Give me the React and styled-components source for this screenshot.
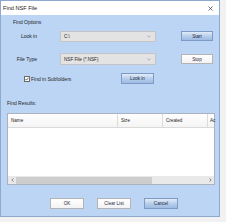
import styled, { createGlobalStyle } from "styled-components";

const GlobalStyle = createGlobalStyle`
  html, body {
    margin: 0;
    padding: 0;
    background: #f2f2f2;
  }
  body {
    width: 226px;
    height: 222px;
    overflow: hidden;
    font-family: "Liberation Sans", Arial, sans-serif;
    color: #1e1e1e;
  }
`;

const Window = styled.div`
  width: 218px;
  height: 215px;
  border: 1px solid #8ea9cf;
  background: #bcd5f5;
  display: flex;
  flex-direction: column;
  box-sizing: content-box;
`;

const TitleBar = styled.div`
  height: 14px;
  background: #ffffff;
  display: flex;
  align-items: center;
  justify-content: space-between;
  padding: 0 6px 0 2px;
  font-size: 5.6px;
  color: #222;
`;

const Body = styled.div`
  flex: 1;
  display: flex;
  flex-direction: column;
`;

const GroupLabel = styled.div`
  height: 8px;
  line-height: 8px;
  font-size: 5px;
  margin: ${(p) => p.$top}px 0 0 ${(p) => p.$left}px;
`;

const Row = styled.div`
  display: flex;
  align-items: center;
  height: ${(p) => p.$h}px;
  margin-top: ${(p) => p.$top}px;
`;

const Label = styled.div`
  width: 36px;
  text-align: right;
  font-size: 5px;
`;

const Combo = styled.div`
  margin-left: 23px;
  width: 96px;
  height: ${(p) => p.$h}px;
  box-sizing: border-box;
  background: #e3e3e3;
  border: 1px solid #c4c4c4;
  display: flex;
  align-items: center;
  justify-content: space-between;
  padding: 0 4px 0 3px;
  font-size: 4.6px;
`;

const Button = styled.div`
  width: ${(p) => p.$w || 32}px;
  height: ${(p) => p.$h || 10}px;
  box-sizing: border-box;
  margin-left: ${(p) => p.$left || 0}px;
  display: flex;
  align-items: center;
  justify-content: center;
  font-size: 4.6px;
  border: 1px solid ${(p) => (p.$primary ? "#7d9bc6" : "#b4b4b4")};
  background: ${(p) =>
    p.$primary
      ? "linear-gradient(#e2ecf8, #b8cfec 50%, #9fbbe2)"
      : "linear-gradient(#ffffff, #f3f3f3)"};
  color: #1e2a3a;
`;

const CheckWrap = styled.div`
  display: flex;
  align-items: center;
  margin-left: 23px;
  width: 97px;
  font-size: 5px;
  gap: 1px;
`;

const Box = styled.div`
  width: 6px;
  height: 6px;
  box-sizing: border-box;
  border: 1px solid #6a6a6a;
  background: #fff;
  display: flex;
  align-items: center;
  justify-content: center;
`;

const List = styled.div`
  margin: 6px 4px 0 6px;
  height: 70px;
  background: #fff;
  border: 1px solid #a9b3bf;
  display: flex;
  flex-direction: column;
`;

const Header = styled.div`
  height: 13px;
  display: flex;
  border-bottom: 1px solid #dadada;
  background: linear-gradient(#ffffff, #f4f4f4);
`;

const Col = styled.div`
  width: ${(p) => p.$w}px;
  flex: ${(p) => (p.$grow ? 1 : "none")};
  box-sizing: border-box;
  border-right: ${(p) => (p.$last ? "none" : "1px solid #dcdcdc")};
  padding-left: ${(p) => (p.$last ? 2 : 3)}px;
  font-size: 4.6px;
  display: flex;
  align-items: center;
  white-space: nowrap;
`;

const ListArea = styled.div`
  flex: 1;
`;

const ScrollBar = styled.div`
  height: 8px;
  display: flex;
  align-items: center;
  background: #e9e9e9;
`;

const Arrow = styled.div`
  width: 8px;
  height: 8px;
  display: flex;
  align-items: center;
  justify-content: center;
`;

const Thumb = styled.div`
  width: 136px;
  height: 7px;
  background: #cdcdcd;
`;

const Track = styled.div`
  flex: 1;
`;

const Footer = styled.div`
  display: flex;
  margin: 13px 0 0 49px;
  gap: 13px;
`;

const Chevron = () => (
  <svg width="4" height="3" viewBox="0 0 4 3">
    <path d="M0.4 0.6 L2 2.2 L3.6 0.6" fill="none" stroke="#8a8a8a" strokeWidth="0.6" />
  </svg>
);

const Close = () => (
  <svg width="5" height="5" viewBox="0 0 5 5">
    <path d="M0.5 0.5 L4.5 4.5 M4.5 0.5 L0.5 4.5" stroke="#333" strokeWidth="0.7" />
  </svg>
);

const Check = () => (
  <svg width="4" height="4" viewBox="0 0 4 4">
    <path d="M0.5 2 L1.5 3.1 L3.5 0.7" fill="none" stroke="#2a2a2a" strokeWidth="0.7" />
  </svg>
);

const ScrollArrow = ({ dir }) => (
  <svg width="3" height="4" viewBox="0 0 3 4">
    <path
      d={dir === "left" ? "M2.4 0.4 L0.8 2 L2.4 3.6" : "M0.6 0.4 L2.2 2 L0.6 3.6"}
      fill="none"
      stroke="#555"
      strokeWidth="0.7"
    />
  </svg>
);

export default function App() {
  return (
    <>
      <GlobalStyle />
      <Window>
        <TitleBar>
          <span>Find NSF File</span>
          <Close />
        </TitleBar>
        <Body>
          <GroupLabel $top={3} $left={12}>
            Find Options
          </GroupLabel>
          <Row $h={14} $top={3}>
            <Label>Look in</Label>
            <Combo $h={11}>
              <span>C:\</span>
              <Chevron />
            </Combo>
            <Button $primary $left={25}>
              Start
            </Button>
          </Row>
          <Row $h={14} $top={9}>
            <Label>File Type</Label>
            <Combo $h={12}>
              <span>NSF File (*.NSF)</span>
              <Chevron />
            </Combo>
            <Button $left={25}>Stop</Button>
          </Row>
          <Row $h={13} $top={6}>
            <CheckWrap>
              <Box>
                <Check />
              </Box>
              <span>Find in Subfolders</span>
            </CheckWrap>
            <Button $primary $w={33} $h={11}>
              Look in
            </Button>
          </Row>
          <GroupLabel $top={14} $left={6}>
            Find Results:
          </GroupLabel>
          <List>
            <Header>
              <Col $w={110}>Name</Col>
              <Col $w={45}>Size</Col>
              <Col $w={45}>Created</Col>
              <Col $grow $last>
                Ac
              </Col>
            </Header>
            <ListArea />
            <ScrollBar>
              <Arrow>
                <ScrollArrow dir="left" />
              </Arrow>
              <Thumb />
              <Track />
              <Arrow>
                <ScrollArrow dir="right" />
              </Arrow>
            </ScrollBar>
          </List>
          <Footer>
            <Button $w={34} $h={11}>OK</Button>
            <Button $w={34} $h={11}>Clear List</Button>
            <Button $primary $w={34} $h={11}>
              Cancel
            </Button>
          </Footer>
        </Body>
      </Window>
    </>
  );
}
